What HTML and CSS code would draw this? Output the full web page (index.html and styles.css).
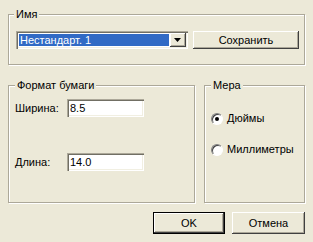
FILE: index.html
```html
<!DOCTYPE html>
<html lang="ru">
<head>
<meta charset="utf-8">
<title>Бумага</title>
<link rel="stylesheet" href="styles.css">
</head>
<body>
<div class="dialog">
  <div class="group group-name">
    <span class="group-title">Имя</span>
    <div class="name-row">
      <div class="combo">
        <span class="combo-value">Нестандарт. 1</span>
        <span class="combo-btn"><svg width="7" height="4" viewBox="0 0 7 4"><path d="M0 0h7L3.5 4z" fill="#000"/></svg></span>
      </div>
      <button class="btn">Сохранить</button>
    </div>
  </div>
  <div class="groups-row">
    <div class="group group-format">
      <span class="group-title">Формат бумаги</span>
      <div class="field-row first"><span class="field-label">Ширина:</span><span class="input">8.5</span></div>
      <div class="field-row second"><span class="field-label">Длина:</span><span class="input">14.0</span></div>
    </div>
    <div class="group group-units">
      <span class="group-title">Мера</span>
      <div class="radio-row first"><span class="radio checked"></span><span>Дюймы</span></div>
      <div class="radio-row second"><span class="radio"></span><span>Миллиметры</span></div>
    </div>
  </div>
  <div class="actions">
    <button class="btn btn-default">OK</button>
    <button class="btn btn-cancel">Отмена</button>
  </div>
</div>
</body>
</html>
```
FILE: styles.css
```css
* { box-sizing: border-box; }
html, body { margin: 0; }
body {
  background: #ECE9D8;
  font: 11px/13px "Liberation Sans", Arial, sans-serif;
  color: #000;
  width: 313px;
  height: 242px;
  overflow: hidden;
}
.dialog {
  padding: 14px 0 0 8px;
  display: flex;
  flex-direction: column;
  align-items: flex-start;
}
.group {
  border: 1px solid #ACA899;
  box-shadow: inset 1px 1px #fff, 1px 1px #fff;
  display: flex;
  flex-direction: column;
  align-items: flex-start;
}
.group-title {
  margin: -7px 0 0 -2px;
  padding: 0 2px;
  background: #ECE9D8;
  line-height: 13px;
  white-space: nowrap;
}
.group-name {
  width: 297px;
  padding: 0 6px 15px 7px;
}
.name-row {
  margin-top: 10px;
  display: grid;
  grid-template-columns: 172px 106px;
  gap: 5px;
}
.combo {
  height: 18px;
  background: #fff;
  box-shadow: inset 1px 1px #ACA899, inset 2px 2px #716F64, inset -1px -1px #fff, inset -2px -2px #F1EFE2;
  padding: 2px;
  display: flex;
}
.combo-value {
  flex: 1;
  margin: 1px;
  background: #316AC5;
  color: #fff;
  padding-left: 1px;
  line-height: 12px;
  white-space: nowrap;
}
.combo-btn {
  width: 16px;
  height: 14px;
  background: #ECE9D8;
  box-shadow: inset -1px -1px #404040, inset 1px 1px #fff, inset -2px -2px #ACA899;
  display: flex;
  align-items: center;
  justify-content: center;
  padding: 0 1px 1px 0;
}
.btn {
  font: inherit;
  color: #000;
  background: #ECE9D8;
  border: none;
  padding: 0;
  height: 18px;
  box-shadow: inset -1px -1px #404040, inset 1px 1px #fff, inset -2px -2px #ACA899;
}
.groups-row {
  margin-top: 20px;
  display: flex;
  gap: 9px;
}
.group-format {
  width: 187px;
  padding: 0 6px 31px 6px;
}
.group-format .group-title { margin-left: 0; }
.field-row {
  display: flex;
  align-items: center;
}
.field-row.first { margin-top: 7px; }
.field-row.second { margin-top: 36px; }
.field-label { width: 52px; }
.input {
  width: 77px;
  height: 18px;
  background: #fff;
  box-shadow: inset 1px 1px #ACA899, inset 2px 2px #716F64, inset -1px -1px #fff, inset -2px -2px #F1EFE2;
  padding: 2px 3px;
  line-height: 14px;
}
.group-units {
  width: 101px;
  padding: 0 4px 0 6px;
}
.group-units .group-title { margin-left: 0; }
.radio-row {
  display: flex;
  align-items: center;
  gap: 4px;
  line-height: 13px;
}
.radio-row.first { margin-top: 20px; }
.radio-row.second { margin-top: 18px; }
.radio {
  width: 12px;
  height: 12px;
  border-radius: 50%;
  background: #fff;
  border: 1px solid;
  border-color: #808080 #fff #fff #808080;
  box-shadow: inset 1px 1px #404040;
  display: flex;
  align-items: center;
  justify-content: center;
}
.radio.checked::after {
  content: "";
  width: 4px;
  height: 4px;
  border-radius: 50%;
  background: #000;
}
.actions {
  margin-top: 9px;
  align-self: stretch;
  display: flex;
  justify-content: flex-start;
  gap: 7px;
  padding-left: 145px;
}
.actions .btn {
  height: 22px;
}
.btn-default {
  width: 72px;
  box-shadow: inset 0 0 0 1px #000, inset -2px -2px #404040, inset 2px 2px #fff, inset -3px -3px #ACA899;
}
.btn-cancel { width: 73px; }
```
